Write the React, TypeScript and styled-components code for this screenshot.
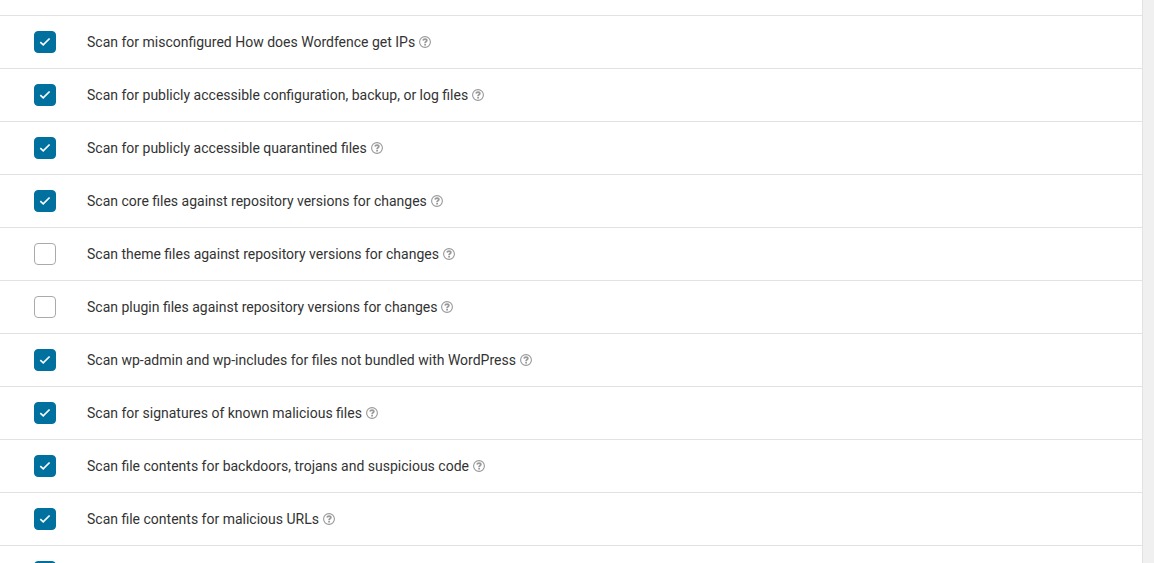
import React from "react";
import styled, { createGlobalStyle } from "styled-components";

const GlobalStyle = createGlobalStyle`
  * { box-sizing: border-box; }
  html { overflow: hidden; }
  body { margin: 0; background: #f0f0f0; font-family: Roboto, "Liberation Sans", sans-serif; font-size: 14px; color: #333; }
`;

const Page = styled.main`
  max-height: 100vh;
  overflow: hidden;
  padding-right: 11px;
`;

const Panel = styled.section`
  background: #fff;
  border-right: 1px solid #e2e2e2;
  padding-top: 15px;
`;

const OptionList = styled.ul`
  list-style: none;
  margin: 0;
  padding: 0;
`;

const OptionRow = styled.li`
  display: flex;
  align-items: center;
  height: 53px;
  padding: 0 34px;
  border-top: 1px solid #e2e2e2;
`;

const Box = styled.span`
  display: grid;
  flex: none;
  width: 22px;
  height: 22px;
  margin-right: 31px;
  > * { grid-area: 1 / 1; }
`;

const Checkbox = styled.input`
  appearance: none;
  width: 22px;
  height: 22px;
  margin: 0;
  border: 1px solid #aaa;
  border-radius: 4px;
  background: #fff;
  cursor: pointer;
  &:checked { background: #00709e; border-color: #00709e; }
  &:not(:checked) + svg { visibility: hidden; }
`;

const Check = styled.svg`
  place-self: center;
  pointer-events: none;
`;

const Label = styled.label`
  line-height: 20px;
`;

const HelpLink = styled.a`
  display: flex;
  margin-left: 4px;
  color: #999;
`;

const options = [
  { id: "ips", text: "Scan for misconfigured How does Wordfence get IPs", on: true },
  { id: "config", text: "Scan for publicly accessible configuration, backup, or log files", on: true },
  { id: "quarantine", text: "Scan for publicly accessible quarantined files", on: true },
  { id: "core", text: "Scan core files against repository versions for changes", on: true },
  { id: "theme", text: "Scan theme files against repository versions for changes", on: false },
  { id: "plugin", text: "Scan plugin files against repository versions for changes", on: false },
  { id: "bundled", text: "Scan wp-admin and wp-includes for files not bundled with WordPress", on: true },
  { id: "signatures", text: "Scan for signatures of known malicious files", on: true },
  { id: "backdoors", text: "Scan file contents for backdoors, trojans and suspicious code", on: true },
  { id: "urls", text: "Scan file contents for malicious URLs", on: true },
  { id: "more", text: "", on: true },
];

export default function App() {
  return (
    <Page>
      <GlobalStyle />
      <Panel>
        <OptionList>
          {options.map((o) => (
            <OptionRow key={o.id}>
              <Box>
                <Checkbox type="checkbox" id={o.id} defaultChecked={o.on} aria-label={o.text ? undefined : "Scan option"} />
                <Check width="12" height="12" viewBox="0 0 12 12" aria-hidden="true">
                  <path d="M1.3 6.2 4.2 8.8 10.6 2.5" fill="none" stroke="#fff" strokeWidth="1.7" />
                </Check>
              </Box>
              {o.text && (
                <>
                  <Label htmlFor={o.id}>{o.text}</Label>
                  <HelpLink href="#help" aria-label={`Help: ${o.text}`}>
                    <svg width="12" height="12" viewBox="0 0 12 12" fill="none" stroke="currentColor" aria-hidden="true">
                      <circle cx="6" cy="6" r="5.4" strokeWidth="1.1" />
                      <path d="M4 4.6C4.3 3.5 5 3.1 6 3.1 7.1 3.1 7.8 3.7 7.8 4.5 7.8 5.6 6.1 5.7 6.1 7.1M6.1 7.8V9.4" strokeWidth="1.8" />
                    </svg>
                  </HelpLink>
                </>
              )}
            </OptionRow>
          ))}
        </OptionList>
      </Panel>
    </Page>
  );
}
